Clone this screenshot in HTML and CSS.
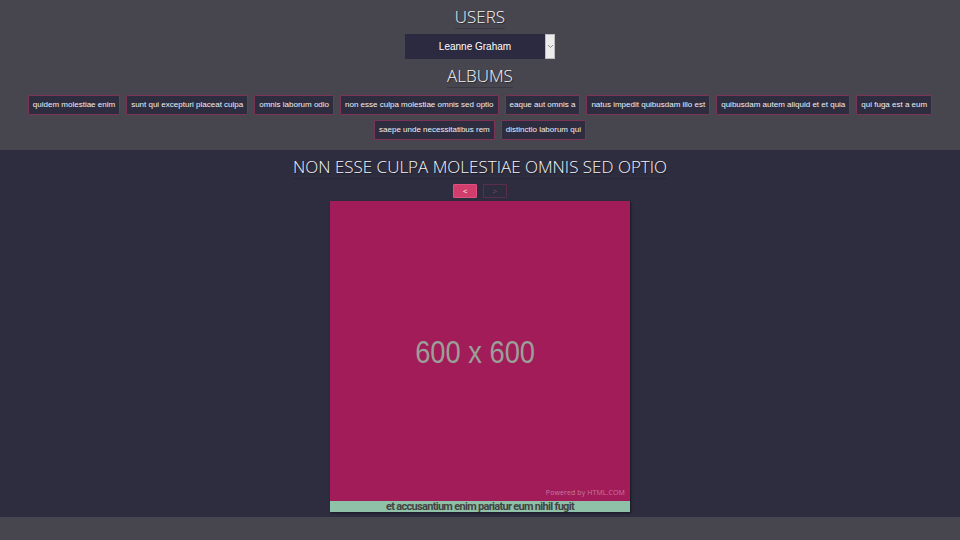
FILE: index.html
```html
<!DOCTYPE html>
<html>
<head>
<meta charset="utf-8">
<link rel="stylesheet" href="styles.css">
</head>
<body>
<header class="top">
  <h2 class="heading"><span>USERS</span></h2>
  <div class="select">
    <span class="select-value">Leanne Graham</span>
    <span class="select-arrow"><svg width="7" height="5" viewBox="0 0 7 5"><path d="M1 1 L3.5 3.5 L6 1" fill="none" stroke="#8a8a8a" stroke-width="1"/></svg></span>
  </div>
  <h2 class="heading"><span>ALBUMS</span></h2>
  <div class="albums">
    <button class="album">quidem molestiae enim</button>
    <button class="album">sunt qui excepturi placeat culpa</button>
    <button class="album">omnis laborum odio</button>
    <button class="album">non esse culpa molestiae omnis sed optio</button>
    <button class="album">eaque aut omnis a</button>
    <button class="album">natus impedit quibusdam illo est</button>
    <button class="album">quibusdam autem aliquid et et quia</button>
    <button class="album">qui fuga est a eum</button>
    <button class="album">saepe unde necessitatibus rem</button>
    <button class="album">distinctio laborum qui</button>
  </div>
</header>
<main class="viewer">
  <h2 class="heading title"><span>NON ESSE CULPA MOLESTIAE OMNIS SED OPTIO</span></h2>
  <div class="nav">
    <button class="nav-btn active">&lt;</button>
    <button class="nav-btn">&gt;</button>
  </div>
  <figure class="photo">
    <div class="placeholder">
      <span class="size">600 x 600</span>
      <span class="powered">Powered by HTML.COM</span>
    </div>
    <figcaption class="caption">et accusantium enim pariatur eum nihil fugit</figcaption>
  </figure>
</main>
</body>
</html>
```
FILE: styles.css
```css
html, body {
  margin: 0;
  padding: 0;
}
body {
  background: #47464f;
  font-family: "Liberation Sans", Arial, sans-serif;
  color: #fff;
}
.top {
  background: #47464f;
  display: flex;
  flex-direction: column;
  align-items: center;
  padding: 5px 0 10px;
}
.heading {
  margin: 0;
  font-family: "Open Sans", sans-serif;
  font-weight: 300;
  font-size: 17px;
  line-height: 24px;
  color: #f4f4f8;
  text-align: center;
  text-shadow: 1px 1px 1px rgba(0,0,0,0.45);
}
.heading span {
  border-bottom: 1px solid rgba(20,20,30,0.25);
}
.select {
  margin-top: 5px;
  width: 150px;
  height: 25px;
  display: flex;
  background: #2c2a40;
}
.select-value {
  flex: 1;
  font-size: 10px;
  line-height: 25px;
  text-align: center;
  color: #fff;
}
.select-arrow {
  width: 8px;
  background: #ececec;
  border: 1px solid #bdbdbd;
  display: flex;
  align-items: center;
  justify-content: center;
}
.top .heading + .albums { margin-top: 7px; }
.select + .heading { margin-top: 5px; }
.albums {
  display: flex;
  flex-wrap: wrap;
  justify-content: center;
  gap: 5px 6px;
  padding: 0 20px;
}
.album {
  font-family: "Liberation Sans", Arial, sans-serif;
  font-size: 8px;
  line-height: 10px;
  padding: 4px 4px;
  background: #2e2d40;
  color: #eeeef4;
  border: 1px solid #7b3456;
  border-radius: 1px;
  height: 20px;
  margin: 0;
}
.viewer {
  background: #2e2d40;
  display: flex;
  flex-direction: column;
  align-items: center;
  padding: 5px 0 5px;
}
.nav {
  margin-top: 5px;
  display: flex;
  gap: 6px;
}
.nav-btn {
  width: 24px;
  height: 14px;
  padding: 0;
  margin: 0;
  font-family: "Open Sans", sans-serif;
  font-size: 8px;
  line-height: 12px;
  background: transparent;
  color: #6a5570;
  border: 1px solid #5c2e4c;
  border-radius: 1px;
}
.nav-btn.active {
  background: #d13d6d;
  border-color: #e0507f;
  color: #fff;
}
.photo {
  margin: 3px 0 0;
  width: 300px;
  box-shadow: 1px 1px 2px rgba(0,0,0,0.5);
}
.placeholder {
  height: 300px;
  background: #a31c5a;
  display: flex;
  align-items: center;
  justify-content: center;
  position: relative;
}
.size {
  font-family: "Liberation Sans", Arial, sans-serif;
  font-size: 31px;
  color: #9aa097;
  transform: scaleX(0.88);
  margin: 3px 9px 0 0;
}
.powered {
  position: absolute;
  right: 5px;
  bottom: 4px;
  font-family: "Open Sans", sans-serif;
  font-size: 7px;
  letter-spacing: 0.1px;
  color: #c77a9d;
}
.caption {
  height: 11px;
  background: #8fc0a8;
  font-family: Roboto, "Liberation Sans", sans-serif;
  font-weight: bold;
  font-size: 11px;
  line-height: 11px;
  letter-spacing: -0.7px;
  text-align: center;
  color: #434343;
}
```
